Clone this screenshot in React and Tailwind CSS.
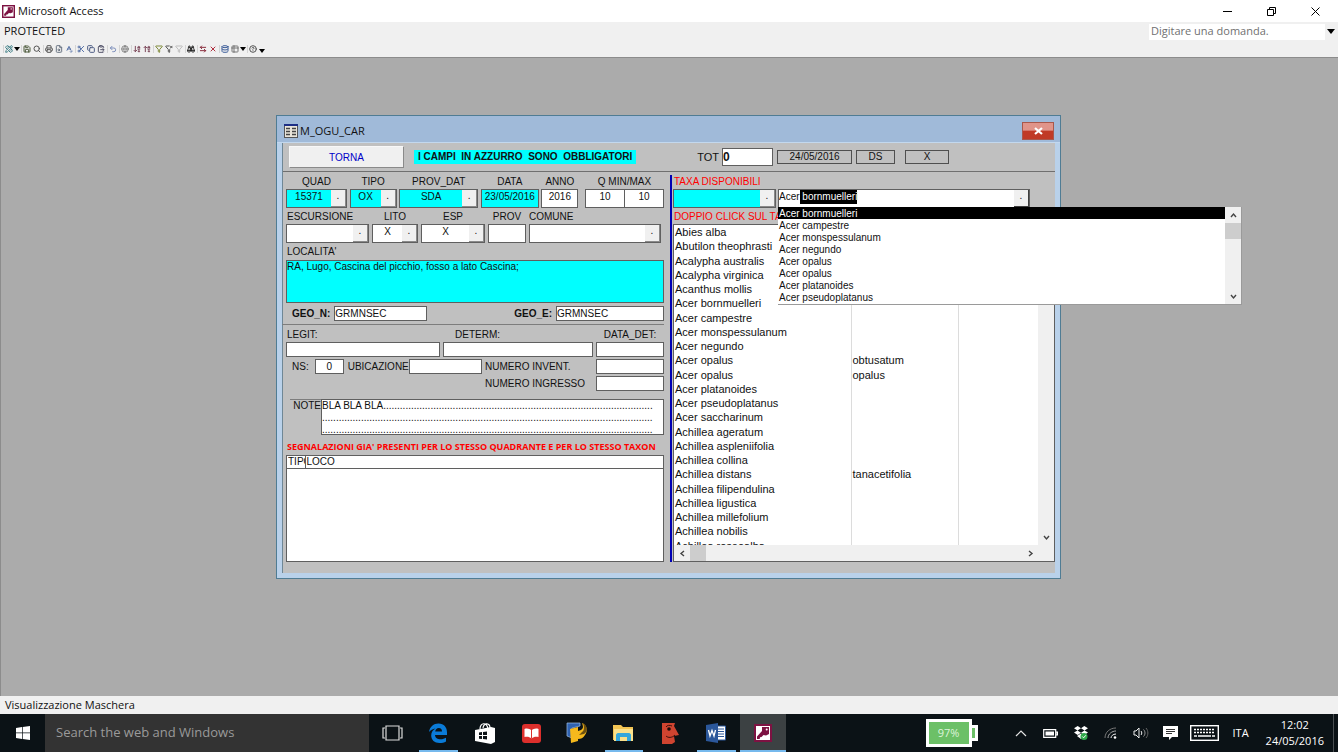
import React, { useEffect, useRef, useState } from "react";
import {
  ArrowDownAZ,
  ArrowLeftRight,
  ArrowUpAZ,
  Binoculars,
  CircleHelp,
  ClipboardPaste,
  Copy,
  Database,
  FileSearch,
  Filter,
  FilterX,
  Globe,
  PencilRuler,
  Printer,
  Save,
  Scissors,
  Search,
  SpellCheck,
  Table2,
  Undo2,
  X,
} from "lucide-react";

const toolGroups = [
  [{ icon: PencilRuler, name: "Visualizza", color: "text-[#3f7f86]", arrow: true }],
  [
    { icon: Save, name: "Salva", color: "text-[#4c5a3c]" },
    { icon: Search, name: "Cerca file", color: "text-[#555555]" },
  ],
  [
    { icon: Printer, name: "Stampa", color: "text-[#555555]" },
    { icon: FileSearch, name: "Anteprima", color: "text-[#6b7684]" },
    { icon: SpellCheck, name: "Ortografia", color: "text-[#5873a8]" },
  ],
  [
    { icon: Scissors, name: "Taglia", color: "text-[#5873a8]" },
    { icon: Copy, name: "Copia", color: "text-[#4d5d84]" },
    { icon: ClipboardPaste, name: "Incolla", color: "text-[#55556b]" },
  ],
  [{ icon: Undo2, name: "Annulla", color: "text-[#7d8fbb]" }],
  [{ icon: Globe, name: "Collegamento", color: "text-[#8a8a8a]" }],
  [
    { icon: ArrowDownAZ, name: "Crescente", color: "text-[#7d4a5c]" },
    { icon: ArrowUpAZ, name: "Decrescente", color: "text-[#7d4a5c]" },
  ],
  [
    { icon: Filter, name: "Filtro selezione", color: "text-[#7f8a3a]" },
    { icon: FilterX, name: "Filtro maschera", color: "text-[#555555]" },
    { icon: Filter, name: "Applica filtro", color: "text-[#bdbdbd]" },
  ],
  [{ icon: Binoculars, name: "Trova", color: "text-[#222222]" }],
  [
    { icon: ArrowLeftRight, name: "Nuovo record", color: "text-[#8a2d3d]" },
    { icon: X, name: "Elimina record", color: "text-[#b03040]" },
  ],
  [
    { icon: Database, name: "Database", color: "text-[#3f5f9a]" },
    { icon: Table2, name: "Nuovo oggetto", color: "text-[#777777]", arrow: true },
  ],
  [{ icon: CircleHelp, name: "Guida", color: "text-[#555555]" }],
];

const taxa = [
  ["Abies alba", ""],
  ["Abutilon theophrasti", ""],
  ["Acalypha australis", ""],
  ["Acalypha virginica", ""],
  ["Acanthus mollis", ""],
  ["Acer bornmuelleri", ""],
  ["Acer campestre", ""],
  ["Acer monspessulanum", ""],
  ["Acer negundo", ""],
  ["Acer opalus", "obtusatum"],
  ["Acer opalus", "opalus"],
  ["Acer platanoides", ""],
  ["Acer pseudoplatanus", ""],
  ["Acer saccharinum", ""],
  ["Achillea ageratum", ""],
  ["Achillea aspleniifolia", ""],
  ["Achillea collina", ""],
  ["Achillea distans", "tanacetifolia"],
  ["Achillea filipendulina", ""],
  ["Achillea ligustica", ""],
  ["Achillea millefolium", ""],
  ["Achillea nobilis", ""],
  ["Achillea roseoalba", ""],
];

const suggestions = [
  "Acer bornmuelleri",
  "Acer campestre",
  "Acer monspessulanum",
  "Acer negundo",
  "Acer opalus",
  "Acer opalus",
  "Acer platanoides",
  "Acer pseudoplatanus",
];

const noteText = "BLA BLA BLA" + ".".repeat(97) + "\n" + ".".repeat(119) + "\n" + ".".repeat(119);

const Arrow = () => (
  <svg width="6" height="4" viewBox="0 0 6 4" className="shrink-0">
    <path d="M0 0h6L3 4z" fill="#000" />
  </svg>
);

const Chevron = ({ className }) => (
  <svg width="7" height="7" viewBox="0 0 7 7" className={className}>
    <path d="M1 5l2.5-3L6 5" fill="none" stroke="#444" strokeWidth="1.4" />
  </svg>
);

const AccessLogo = ({ size }) => (
  <svg width={size} height={size} viewBox="0 0 18 18">
    <rect x="1" y="1" width="16" height="16" fill="#fff" stroke="#7d1242" strokeWidth="2" />
    <path d="M8 3h7v7l-3 1.500-2.500-.5-2 2-1.500.3-.3 1.700H3v-2.500L8 7z" fill="#7d1242" />
    <circle cx="12.700" cy="5.400" r="1" fill="#fff" />
  </svg>
);

const Field = ({ label, className, labelClass, children }) => (
  <label className={`flex min-w-0 flex-col ${className}`}>
    <span className={`flex h-4 items-center whitespace-pre ${labelClass || "justify-center"}`}>{label}</span>
    {children}
  </label>
);

const Combo = ({ value = "", bg = "bg-white", label }) => (
  <div className={`flex h-[19px] border border-[#5f5f5f] ${bg}`}>
    <select
      aria-label={label}
      defaultValue={value}
      className="min-w-0 flex-1 appearance-none pb-1 text-center leading-3 outline-none"
    >
      <option>{value}</option>
    </select>
    <span className="flex w-[15px] shrink-0 justify-center border-r border-b border-[#8a8a8a] bg-[#f0f0f0] leading-3">
      .
    </span>
  </div>
);

const box = "min-w-0 border border-[#5f5f5f] bg-white outline-none";

const LeftPanel = () => (
  <section className="flex w-[378px] shrink-0 flex-col">
    <div className="mt-px flex justify-between">
      <Field label="QUAD" className="w-[61px]">
        <Combo value="15371" bg="bg-[#00ffff]" />
      </Field>
      <Field label="TIPO" className="w-[47px]">
        <Combo value="OX" bg="bg-[#00ffff]" />
      </Field>
      <Field label="PROV_DAT" className="w-[79px]">
        <Combo value="SDA" bg="bg-[#00ffff]" />
      </Field>
      <Field label="DATA" className="w-[58px]">
        <input defaultValue="23/05/2016" className="h-[19px] min-w-0 border border-[#5f5f5f] bg-[#00ffff] pb-1 text-center outline-none" />
      </Field>
      <Field label="ANNO" className="w-[37px]">
        <input defaultValue="2016" className={`h-[19px] pb-1 text-center ${box}`} />
      </Field>
      <div className="ml-1 flex w-[79px] flex-col">
        <span className="flex h-4 items-center justify-center">Q MIN/MAX</span>
        <div className="flex">
          <input aria-label="Q MIN" defaultValue="10" className={`h-[19px] flex-1 pb-1 text-center ${box}`} />
          <input aria-label="Q MAX" defaultValue="10" className={`-ml-px h-[19px] flex-1 pb-1 text-center ${box}`} />
        </div>
      </div>
    </div>

    <div className="flex gap-[3px]">
      <Field label="ESCURSIONE" className="w-[83px]" labelClass="pl-px">
        <Combo />
      </Field>
      <Field label="LITO" className="w-[46px]">
        <Combo value="X" />
      </Field>
      <Field label="ESP" className="w-[64px]">
        <Combo value="X" />
      </Field>
      <Field label="PROV" className="w-[38px]">
        <input className={`h-[19px] ${box}`} />
      </Field>
      <Field label="COMUNE" className="w-[132px]" labelClass="justify-start">
        <Combo />
      </Field>
    </div>

    <label className="flex flex-col">
      <span className="flex h-[17px] items-center pl-px">LOCALITA'</span>
      <textarea
        defaultValue="RA, Lugo, Cascina del picchio, fosso a lato Cascina;"
        className="h-[43px] resize-none border border-[#5f5f5f] bg-[#00ffff] leading-3 outline-none"
      />
    </label>

    <div className="mt-[3px] flex items-center justify-between">
      <label className="flex items-center gap-1 pl-[6px] font-bold">
        GEO_N:
        <input defaultValue="GRMNSEC" className={`h-[15px] w-[93px] font-normal ${box}`} />
      </label>
      <label className="flex items-center gap-1 font-bold">
        GEO_E:
        <input defaultValue="GRMNSEC" className={`h-[15px] w-[108px] font-normal ${box}`} />
      </label>
    </div>
    <div className="mt-[3px] -ml-1 border-t border-[#7d7d7d]" />

    <div className="mt-px flex gap-[3px]">
      <Field label="LEGIT:" className="w-[154px] shrink-0" labelClass="pl-px">
        <input className={`h-[15px] ${box}`} />
      </Field>
      <Field label="DETERM:" className="w-[150px] shrink-0" labelClass="pl-3">
        <input className={`h-[15px] ${box}`} />
      </Field>
      <Field label="DATA_DET:" className="flex-1">
        <input className={`h-[15px] ${box}`} />
      </Field>
    </div>

    <div className="mt-[2px] flex justify-between">
      <div className="flex h-[15px] items-center pl-[6px]">
        <label className="flex items-center gap-[6px]">
          NS:
          <input defaultValue="0" className={`h-[15px] w-[29px] text-center ${box}`} />
        </label>
        <label className="ml-1 flex items-center">
          UBICAZIONE
          <input className={`h-[15px] w-[73px] ${box}`} />
        </label>
      </div>
      <div className="flex w-[179px] flex-col gap-[2px]">
        <label className="flex items-center justify-between">
          NUMERO INVENT.
          <input className={`h-[15px] w-[68px] ${box}`} />
        </label>
        <label className="flex items-center justify-between">
          NUMERO INGRESSO
          <input className={`h-[15px] w-[68px] ${box}`} />
        </label>
      </div>
    </div>

    <label className="mt-2 ml-1 flex">
      <span className="flex w-[31px] justify-end border-t border-[#7d7d7d] leading-3">NOTE</span>
      <textarea
        defaultValue={noteText}
        className="h-9 min-w-0 flex-1 resize-none overflow-hidden border border-[#5f5f5f] bg-white leading-3 outline-none"
      />
    </label>

    <p className="flex h-5 items-center pt-1 pl-px font-['Open_Sans','Noto_Sans',sans-serif] text-[9px] font-bold whitespace-nowrap text-[#ff0000]">
      SEGNALAZIONI GIA' PRESENTI PER LO STESSO QUADRANTE E PER LO STESSO TAXON
    </p>

    <div className="h-[107px] border border-[#5f5f5f] bg-white">
      <table className="w-full table-fixed border-collapse">
        <thead>
          <tr className="h-3 border-b border-[#5f5f5f] text-left leading-[11px]">
            <th className="w-[18px] border-r border-[#5f5f5f] pl-px font-normal">
              <div className="overflow-hidden">TIPO</div>
            </th>
            <th className="pl-px font-normal">LOCO</th>
          </tr>
        </thead>
      </table>
    </div>
  </section>
);

const TaxonCombo = () => {
  const inputRef = useRef(null);
  const [text, setText] = useState("Acer bornmuelleri");

  // keep the typed part and highlight the autocompleted rest
  useEffect(() => {
    inputRef.current.focus();
    inputRef.current.setSelectionRange(4, 17);
  }, []);

  return (
    <div className="relative w-[252px]">
      <div className="flex h-[19px] border border-[#5f5f5f] bg-white">
        <input
          ref={inputRef}
          aria-label="Taxon"
          value={text}
          onChange={(e) => setText(e.target.value)}
          className="min-w-0 flex-1 pb-1 outline-none selection:bg-black selection:text-white"
        />
        <span className="flex w-[15px] justify-center border-r border-b border-[#3f3f3f] bg-[#f0f0f0] leading-3">.</span>
      </div>
      <div className="absolute top-[18px] left-0 z-10 flex w-[464px] border-r border-b border-[#9a9a9a] bg-white">
        <ul className="flex-1 pb-px">
          {suggestions.map((name, i) => (
            <li key={i} className={`h-3 pl-px leading-[14px] ${i === 0 ? "bg-black text-white" : ""}`}>
              {name}
            </li>
          ))}
        </ul>
        <div className="flex w-4 flex-col items-center justify-between bg-[#f0f0f0] pb-1">
          <div className="flex w-full flex-col items-center">
            <span className="flex h-4 items-center">
              <Chevron />
            </span>
            <span className="h-4 w-full bg-[#cdcdcd]" />
          </div>
          <Chevron className="rotate-180" />
        </div>
      </div>
    </div>
  );
};

const RightPanel = () => (
  <section className="flex min-w-0 flex-1 flex-col">
    <h2 className="mt-px flex h-4 items-center pl-px text-[#ff0000]">TAXA DISPONIBILI</h2>
    <div className="flex gap-[2px]">
      <div className="w-[103px]">
        <Combo label="Taxa disponibili" bg="bg-[#00ffff]" />
      </div>
      <TaxonCombo />
    </div>
    <p className="flex h-4 items-center pl-px text-[#ff0000]">DOPPIO CLICK SUL TAXON</p>
    <div className="flex grow flex-col border border-[#5f5f5f] bg-white">
      <div className="flex h-0 grow overflow-hidden">
        <table className="h-[328px] w-full table-fixed border-collapse text-[11px]">
          <tbody>
            {taxa.map(([name, sub], i) => (
              <tr key={i} className="leading-[14px]">
                <td className="w-[177px] border-r border-[#dcdcdc] p-0 pl-px">{name}</td>
                <td className="w-[107px] border-r border-[#dcdcdc] p-0 pl-px">{sub}</td>
                <td />
              </tr>
            ))}
          </tbody>
        </table>
        <div className="flex h-full w-4 shrink-0 flex-col items-center justify-end bg-[#f0f0f0] pb-1">
          <Chevron className="rotate-180" />
        </div>
      </div>
      <div className="flex h-4 items-center bg-[#f0f0f0]">
        <span className="flex w-4 justify-center">
          <Chevron className="-rotate-90" />
        </span>
        <span className="h-full w-4 bg-[#cdcdcd]" />
        <span className="mr-4 ml-auto flex w-4 justify-center">
          <Chevron className="rotate-90" />
        </span>
      </div>
    </div>
  </section>
);

const FormWindow = () => (
  <div className="w-full max-w-[785px] border border-[#4f7c94] bg-[#b9d1ea] px-[5px] pb-[5px]">
    <div className="-mx-[5px] flex h-[27px] items-center border-b border-[#c3d8ee] bg-[#a0bad9] pr-[6px] pl-[7px] pt-1">
      <svg width="14" height="14" viewBox="0 0 14 14">
        <rect x=".5" y=".5" width="13" height="13" fill="#e9e4da" stroke="#555" />
        <path d="M0 1h14" stroke="#1d2f86" strokeWidth="2" />
        <path d="M2 4.500h4M2 7.500h4M2 10.500h4M8 4.500h4M8 7.500h4M8 10.500h4" stroke="#444" strokeWidth="1.500" />
      </svg>
      <h1 className="ml-[2px] font-['Open_Sans','Noto_Sans',sans-serif] text-[11px]">M_OGU_CAR</h1>
      <button
        aria-label="Chiudi"
        className="ml-auto flex h-[18px] w-8 items-center justify-center border border-[#a8584c] bg-linear-to-b from-[#e0948a] from-45% to-[#c03a26] to-50%"
      >
        <svg width="9" height="8" viewBox="0 0 9 8">
          <path d="M1 1l7 6M8 1L1 7" stroke="#fff" strokeWidth="2.200" />
        </svg>
      </button>
    </div>
    <div className="border-l border-[#6f8796] bg-[#c0c0c0] pb-[11px]">
      <header className="flex h-[29px] items-center border-b border-[#6f6f6f] pl-[6px]">
        <button className="h-[22px] w-[115px] border border-t-[#f8f8f8] border-r-[#8a8a8a] border-b-[#8a8a8a] border-l-[#f8f8f8] bg-[#f0f0f0] text-[#0000c8]">
          TORNA
        </button>
        <strong className="ml-[10px] bg-[#00ffff] px-1 leading-[14px] whitespace-pre">
          I CAMPI  IN AZZURRO  SONO  OBBLIGATORI
        </strong>
        <label className="ml-[61px] flex items-center gap-[3px] text-[11px] font-medium">
          TOT
          <input defaultValue="0" className={`h-[18px] w-[51px] text-[12px] font-bold ${box}`} />
        </label>
        <output className="ml-1 w-[75px] border border-[#4f4f4f] text-center leading-[12px]">24/05/2016</output>
        <output className="ml-1 w-[39px] border border-[#4f4f4f] text-center leading-[12px]">DS</output>
        <output className="ml-[10px] w-[44px] border border-[#4f4f4f] text-center leading-[12px]">X</output>
      </header>
      <div className="flex pl-[3px]">
        <LeftPanel />
        <div className="mt-[3px] mr-px ml-[6px] w-[2px] shrink-0 bg-[#0000b4]" />
        <RightPanel />
      </div>
    </div>
  </div>
);

const EdgeIcon = () => (
  <svg width="20" height="20" viewBox="0 0 20 20">
    <path
      d="M1 9C2 3.500 5.500.5 10.500.5c5.500 0 8.500 4 8.500 8.700V12H7c.2 3 2.600 4.300 5.500 4.300 2.200 0 4-.6 5.500-1.500v3.700c-1.700 1-4 1.500-6.500 1.500-5 0-8.300-3-8.300-7.500 0-3.200 1.700-5.600 4.300-6.900C4.700 6 2.500 7.200 1 9zm6.200-.6H14c0-2-1-3.300-3.200-3.300-2 0-3.200 1.300-3.600 3.300z"
      fill="#0a7bd8"
    />
  </svg>
);

const WindowsLogo = ({ size, fill }) => (
  <svg width={size} height={size} viewBox="0 0 14 14">
    <path d="M0 2l6-.9v5.500H0zM6.700 1L14 0v6.600H6.700zM0 7.300h6v5.600L0 12zM6.700 7.300H14V14l-7.300-1z" fill={fill} />
  </svg>
);

const taskIcons = [
  {
    name: "Visualizzazione attività",
    icon: (
      <svg width="21" height="16" viewBox="0 0 21 16" fill="none" stroke="#dcdcdc" strokeWidth="1.200">
        <path d="M4 1h13v14H4zM3 3H1v10h2M18 3h2v10h-2" />
      </svg>
    ),
  },
  { name: "Edge", open: true, icon: <EdgeIcon /> },
  {
    name: "Store",
    icon: (
      <svg width="20" height="22" viewBox="0 0 20 22">
        <path d="M5 7c0-7 7-7 8 0M8 6c1-6 7-5 7 0" fill="none" stroke="#fff" strokeWidth="1.200" />
        <path d="M0 8l16-3 4 1v14l-4 2L0 19z" fill="#fff" />
        <path d="M4 10.500l3-.4v3H4zM8 10l4-.6v3.700H8zM4 14h3v3l-3-.3zM8 14h4v3.600L8 17z" fill="#0b1216" />
      </svg>
    ),
  },
  {
    name: "Lettore",
    icon: (
      <svg width="19" height="19" viewBox="0 0 19 19">
        <rect width="19" height="19" rx="3" fill="#dc2f2c" />
        <path d="M2.500 5c3-1 5 0 7 1.200C11.500 5 13.500 4 16.500 5v8c-3-.8-5 0-7 1.200C7.500 13 5.500 12.200 2.500 13z" fill="#fff" />
        <path d="M9.500 6v8" stroke="#dc2f2c" />
      </svg>
    ),
  },
  {
    name: "Sincronizza",
    icon: (
      <svg width="22" height="22" viewBox="0 0 22 22">
        <path d="M1 1h13v3L6 6v10l-5-2z" fill="#2f62b0" stroke="#9fc0e8" strokeWidth=".7" />
        <path d="M4 7l8-2v4l3-1c3-2 2-4 1-7 5 2 6 8 3 12-2 3-4 4-7 4v2l-7 2z" fill="#f5b81c" />
        <path d="M17 1c5 3 5 9 1 11l-5 1 3-3c3-2 2-6 1-9z" fill="#6b4f10" />
      </svg>
    ),
  },
  {
    name: "Esplora file",
    open: true,
    icon: (
      <svg width="21" height="18" viewBox="0 0 21 18">
        <path d="M0 1h8l2 2h10v13H0z" fill="#f2c453" />
        <path d="M1 5h19v12H1z" fill="#fbe08a" />
        <path d="M3 17v-6c0-1 1-2 2-2h11c1 0 2 1 2 2v6h-4v-4H7v4z" fill="#35a7dc" />
      </svg>
    ),
  },
  {
    name: "Irfan",
    icon: (
      <svg width="18" height="21" viewBox="0 0 18 21">
        <path d="M1 0h13l-1 3 5 9-5 1 1 6-3 2H1z" fill="#cf4430" />
        <circle cx="8" cy="6" r="1.800" fill="#1c0c0a" />
        <path d="M5 4c1-2 4-2 6-1M5 13c2 2 6 2 9-1" fill="none" stroke="#3a100b" />
      </svg>
    ),
  },
  {
    name: "Word",
    open: true,
    icon: (
      <svg width="20" height="20" viewBox="0 0 20 20">
        <path d="M11 3h8.500v14H11z" fill="#fff" stroke="#2b579a" />
        <path d="M12 6h6M12 8.500h6M12 11h6M12 13.500h6" stroke="#2b579a" />
        <path d="M0 2l12-2v20L0 18z" fill="#2b579a" />
        <path d="M2.500 7l1.500 6 2-5.500L8 13l1.500-6" fill="none" stroke="#fff" strokeWidth="1.300" />
      </svg>
    ),
  },
  { name: "Access", open: true, active: true, icon: <AccessLogo size={18} /> },
];

const trayIcons = [
  <svg width="12" height="7" viewBox="0 0 12 7">
    <path d="M1 6l5-5 5 5" fill="none" stroke="#e6e6e6" strokeWidth="1.200" />
  </svg>,
  <svg width="15" height="9" viewBox="0 0 15 9">
    <path d="M.7.700h12v7.600H.7zM13 3h1.500v3H13z" fill="none" stroke="#fff" strokeWidth="1.200" />
    <path d="M2.500 2.500h8.500v4H2.500z" fill="#fff" />
  </svg>,
  <svg width="14" height="14" viewBox="0 0 14 14">
    <path d="M3.700 0L7 2.200 3.500 4.500 0 2.300zM10.300 0L14 2.300l-3.500 2.200L7 2.200zM0 6.600l3.500-2.100L7 6.700 3.700 9zM14 6.600l-3.500-2.100L7 6.700 10.300 9zM3 10l4-2.500 4 2.500-4 3z" fill="#fff" />
    <circle cx="10" cy="10.500" r="3.500" fill="#2fa84a" />
    <path d="M8.300 10.500l1.300 1.300 2.200-2.500" fill="none" stroke="#fff" />
  </svg>,
  <svg width="13" height="12" viewBox="0 0 13 12" fill="none">
    <path d="M1 11C1 5 6 1 12 1" stroke="#777" />
    <path d="M4 11c0-4 4-7 8-7" stroke="#aaa" />
    <path d="M7 11c0-2 2-4 5-4" stroke="#eee" />
    <circle cx="11" cy="10.500" r="1.300" fill="#fff" />
  </svg>,
  <svg width="16" height="12" viewBox="0 0 16 12" fill="none">
    <path d="M1 4h2l3-3v10L3 8H1z" stroke="#eee" />
    <path d="M8 4c1 1 1 3 0 4" stroke="#eee" />
    <path d="M10.500 2.500c2 2 2 5 0 7" stroke="#999" />
    <path d="M13 1c2.500 3 2.500 7 0 10" stroke="#666" />
  </svg>,
  <svg width="15" height="14" viewBox="0 0 15 14">
    <path d="M0 0h15v11H9l-3 3v-3H0z" fill="#fff" />
    <path d="M3 3.500h9M3 5.500h9M3 7.500h6" stroke="#333" />
  </svg>,
];

const Taskbar = () => (
  <footer className="flex h-[38px] shrink-0 bg-[#0b1216] text-white">
    <button aria-label="Start" className="flex w-[45px] items-center justify-center">
      <WindowsLogo size={14} fill="#fff" />
    </button>
    <input
      aria-label="Search"
      placeholder="Search the web and Windows"
      className="w-[324px] bg-[#333333] px-[11px] text-[13px] outline-none placeholder:text-[#9a9a9a]"
    />
    <div className="grid w-[417px] grid-cols-9">
      {taskIcons.map((item) => (
        <button
          key={item.name}
          aria-label={item.name}
          className={`relative flex items-center justify-center ${item.active ? "bg-[#3c4143]" : ""}`}
        >
          {item.icon}
          {item.open && (
            <span className={`absolute bottom-0 h-[2px] bg-[#76b9ed] ${item.active ? "inset-x-0" : "inset-x-1"}`} />
          )}
        </button>
      ))}
    </div>
    <div className="ml-auto flex items-center">
      <div className="mr-7 flex items-center">
        <span className="flex h-7 w-[46px] items-center justify-center border-[3px] border-white bg-[#6cc067] text-[11px] text-[#dff5dc]">
          97%
        </span>
        <span className="flex h-4 w-[6px] items-center bg-white">
          <span className="h-[10px] w-[3px] bg-[#6cc067]" />
        </span>
      </div>
      {trayIcons.map((icon, i) => (
        <span key={i} className="flex w-[30px] justify-center">
          {icon}
        </span>
      ))}
      <svg width="29" height="16" viewBox="0 0 29 16" className="ml-1">
        <rect x=".7" y=".7" width="27.600" height="14.600" fill="none" stroke="#fff" strokeWidth="1.400" />
        <path d="M4 4.500h21M4 7.500h21" stroke="#fff" strokeWidth="1.500" strokeDasharray="2 1" />
        <path d="M4 11h3M8 11h13M22 11h3" stroke="#fff" strokeWidth="1.500" />
      </svg>
      <span className="ml-[14px] text-[11px]">ITA</span>
      <time className="ml-[17px] text-center text-[11px] leading-4">
        12:02
        <br />
        24/05/2016
      </time>
      <span className="mr-1 ml-[9px] h-full border-r border-[#4a4f52]" />
    </div>
  </footer>
);

const App = () => {
  return (
    <div className="flex min-h-screen flex-col bg-[#ababab] font-['Open_Sans','Noto_Sans',sans-serif] text-[11px] text-[#111111]">
      <div className="flex h-[22px] items-center bg-white pl-[2px]">
        <AccessLogo size={13} />
        <span className="ml-[3px]">Microsoft Access</span>
        <div className="mr-px ml-auto flex">
          <button aria-label="Riduci" className="flex w-11 items-center justify-center">
            <span className="h-px w-[9px] bg-black" />
          </button>
          <button aria-label="Ripristina" className="flex w-11 items-center justify-center">
            <svg width="9" height="9" viewBox="0 0 9 9" fill="none" stroke="#000">
              <path d="M.5 2.500h6v6h-6zM2.500 2.500v-2h6v6h-2" />
            </svg>
          </button>
          <button aria-label="Chiudi Access" className="flex w-11 items-center justify-center">
            <svg width="9" height="9" viewBox="0 0 9 9" stroke="#000">
              <path d="M.5.500l8 8M8.500.500l-8 8" />
            </svg>
          </button>
        </div>
      </div>

      <div className="flex h-[19px] items-center justify-between bg-[#f0f0f0] pr-[3px] pl-1">
        <span>PROTECTED</span>
        <label className="flex items-center gap-[2px]">
          <input
            aria-label="Domanda"
            placeholder="Digitare una domanda."
            className="h-4 w-[176px] bg-white px-[2px] outline-none placeholder:text-[#707070]"
          />
          <svg width="8" height="5" viewBox="0 0 8 5">
            <path d="M0 0h8L4 5z" />
          </svg>
        </label>
      </div>

      <div className="flex h-4 items-center bg-[#f0f0f0] pl-[3px]">
        {toolGroups.map((group, g) => (
          <div key={g} className="mr-px flex items-center border-l border-[#d4d4d4]">
            {group.map(({ icon: Icon, name, color, arrow }) => (
              <button key={name} aria-label={name} className={`flex items-center ${color}`}>
                <span className="flex w-[10px] justify-center">
                  <Icon size={8} strokeWidth={3} />
                </span>
                {arrow && <Arrow />}
              </button>
            ))}
          </div>
        ))}
        <span className="mt-1">
          <Arrow />
        </span>
      </div>

      <main className="flex flex-1 items-start justify-center border-t border-l border-[#8c8c8c] pt-[57px] pr-[2px] font-['Liberation_Sans',Arial,sans-serif] text-[10px]">
        <FormWindow />
      </main>

      <div className="flex h-[18px] items-center bg-[#f0f0f0] pt-px pl-[5px]">Visualizzazione Maschera</div>
      <Taskbar />
    </div>
  );
};

export default App;
